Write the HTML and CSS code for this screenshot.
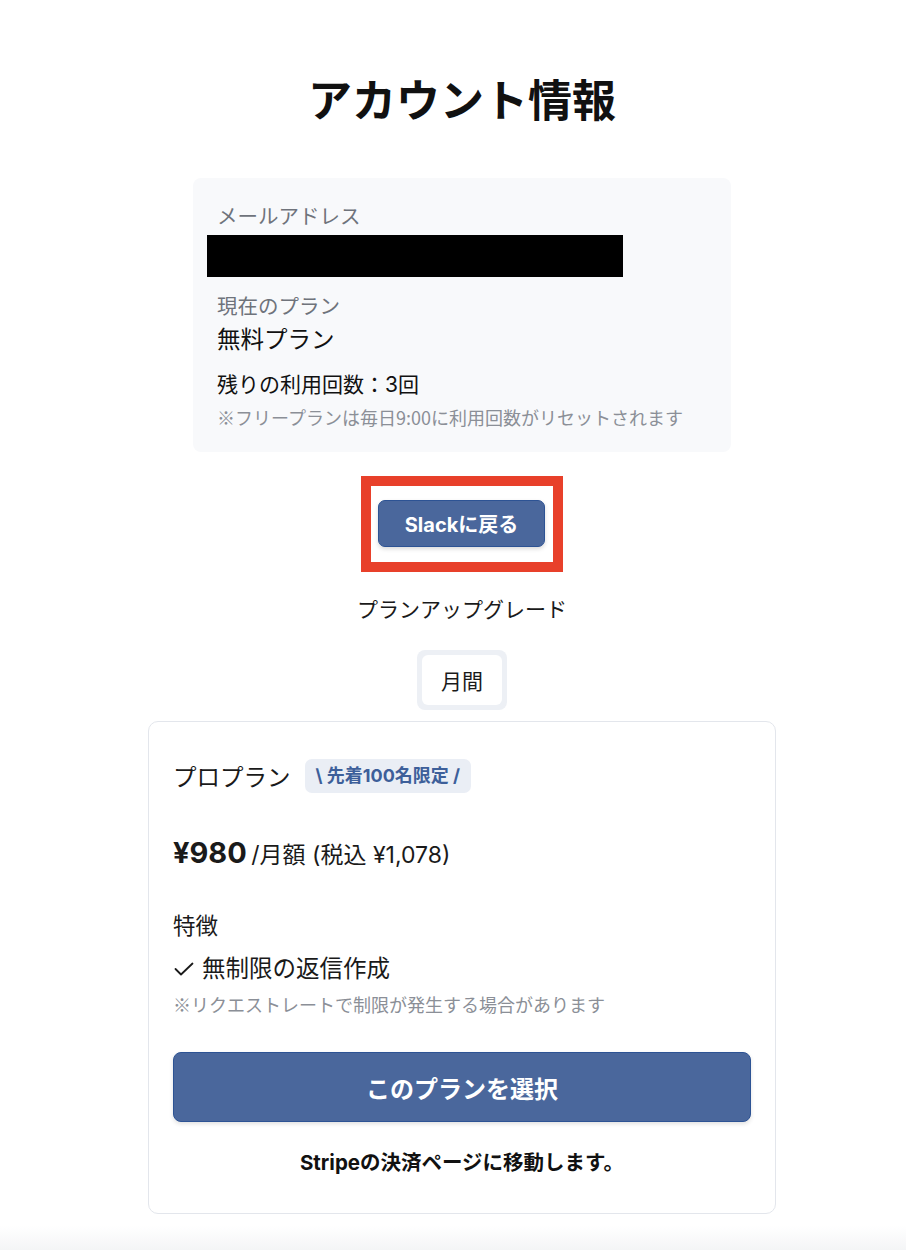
FILE: index.html
```html
<!DOCTYPE html>
<html lang="ja">
<head>
    <meta charset="UTF-8">
    <meta name="viewport" content="width=device-width, initial-scale=1.0">
    <title>アカウント情報</title>
    <link rel="stylesheet" href="styles.css">
</head>
<body>
    <main class="page">
        <h1 class="page-title">アカウント情報</h1>

        <section class="account-box">
            <div class="field-label">メールアドレス</div>
            <div class="email-row"><span class="redacted"></span></div>
            <div class="field-label plan-label">現在のプラン</div>
            <div class="plan-name">無料プラン</div>
            <div class="usage">残りの利用回数：3回</div>
            <div class="note">※フリープランは毎日9:00に利用回数がリセットされます</div>
        </section>

        <div class="highlight">
            <button class="back-button">Slackに戻る</button>
        </div>

        <p class="upgrade-title">プランアップグレード</p>

        <div class="toggle">
            <button class="toggle-item active">月間</button>
        </div>

        <section class="plan-card">
            <div class="plan-head">
                <span class="plan-title">プロプラン</span>
                <span class="badge">\ 先着100名限定 /</span>
            </div>
            <div class="price">
                <span class="price-main">¥980</span>
                <span class="price-sub">/月額 (税込 ¥1,078)</span>
            </div>
            <div class="features-title">特徴</div>
            <div class="feature">
                <svg class="check" width="20" height="14" viewBox="0 0 20 14">
                    <polyline points="1.5,7 7,12.5 18.5,1.5" fill="none" stroke="#1a1a1a" stroke-width="1.8" stroke-linecap="round" stroke-linejoin="round"/>
                </svg>
                <span>無制限の返信作成</span>
            </div>
            <div class="note feature-note">※リクエストレートで制限が発生する場合があります</div>
            <button class="select-button">このプランを選択</button>
            <p class="stripe-note">Stripeの決済ページに移動します。</p>
        </section>
    </main>
    <div class="bottom-fade"></div>
</body>
</html>
```

FILE: styles.css
```css
body {
    margin: 0;
    padding: 0 0 0 18px;
    background: #ffffff;
    color: #1a1a1a;
    font-family: "Inter", "Noto Sans CJK JP", sans-serif;
}
.page {
    display: flex;
    flex-direction: column;
    align-items: center;
    padding-top: 71px;
}
.page-title {
    margin: 0;
    font-size: 44px;
    line-height: 60px;
    font-weight: 700;
    color: #111111;
}
.account-box {
    box-sizing: border-box;
    width: 538px;
    margin-top: 47px;
    padding: 25px 24px 23px;
    background: #f8f9fb;
    border-radius: 8px;
}
.field-label {
    font-size: 20.5px;
    line-height: 28px;
    color: #6f737b;
}
.email-row {
    margin: 4px 0 0 -10px;
    height: 42px;
}
.redacted {
    display: block;
    width: 416px;
    height: 42px;
    background: #000000;
}
.plan-label {
    margin-top: 16px;
}
.plan-name {
    margin-top: 4px;
    font-size: 23.5px;
    line-height: 30px;
    color: #111111;
}
.usage {
    margin-top: 16px;
    font-size: 21px;
    line-height: 28px;
    color: #111111;
}
.note {
    font-family: "Noto Sans CJK JP", sans-serif;
    font-size: 18px;
    line-height: 24px;
    color: #8b8f97;
}
.account-box .note {
    margin-top: 6px;
}
.highlight {
    margin-top: 24px;
    padding: 14px 8px 15px 7px;
    border: 10px solid #e8402a;
}
.back-button {
    display: block;
    width: 167px;
    height: 47px;
    background: #4a679c;
    color: #ffffff;
    border: 1px solid #2d5394;
    border-radius: 7px;
    box-shadow: 0 2px 4px rgba(0, 0, 0, 0.15);
    font-family: inherit;
    font-size: 20px;
    font-weight: 700;
    cursor: pointer;
}
.upgrade-title {
    margin: 24px 0 0;
    font-size: 21px;
    line-height: 28px;
    color: #1a1a1a;
}
.toggle {
    margin-top: 26px;
    padding: 5px;
    background: #edf0f5;
    border-radius: 8px;
}
.toggle-item {
    display: block;
    width: 80px;
    height: 50px;
    background: #ffffff;
    border: none;
    border-radius: 6px;
    font-family: inherit;
    font-size: 21px;
    color: #1a1a1a;
    cursor: pointer;
}
.plan-card {
    box-sizing: border-box;
    width: 628px;
    margin-top: 11px;
    padding: 37px 24px 36px;
    border: 1px solid #e3e6ec;
    border-radius: 10px;
    background: #ffffff;
}
.plan-head {
    display: flex;
    align-items: center;
    gap: 14px;
    height: 34px;
}
.plan-title {
    font-size: 23.5px;
    color: #1a1a1a;
}
.badge {
    padding: 0 11px;
    line-height: 34px;
    background: #eaeef5;
    color: #3d5f9a;
    border-radius: 7px;
    font-size: 18px;
    font-weight: 700;
}
.price {
    margin-top: 40px;
    line-height: 40px;
}
.price-main {
    font-size: 29px;
    font-weight: 700;
    color: #1a1a1a;
}
.price-sub {
    font-size: 23px;
    color: #1a1a1a;
}
.features-title {
    margin-top: 34px;
    font-size: 22.5px;
    line-height: 30px;
}
.feature {
    display: flex;
    align-items: center;
    gap: 8px;
    margin-top: 13px;
    font-size: 23.5px;
    line-height: 30px;
}
.check {
    margin-left: 1px;
}
.feature-note {
    margin-top: 8px;
}
.select-button {
    display: block;
    width: 100%;
    height: 70px;
    margin-top: 36px;
    background: #4a679c;
    color: #ffffff;
    border: 1px solid #2d5394;
    border-radius: 8px;
    box-shadow: 0 2px 4px rgba(0, 0, 0, 0.12);
    font-family: inherit;
    font-size: 24px;
    font-weight: 700;
    cursor: pointer;
}
.stripe-note {
    margin: 27px 0 0;
    text-align: center;
    font-size: 20.5px;
    line-height: 28px;
    font-weight: 700;
    color: #111111;
}
.bottom-fade {
    margin: 12px 0 0 -18px;
    height: 30px;
    background: linear-gradient(to bottom, #ffffff, #f1f2f4);
}
```
